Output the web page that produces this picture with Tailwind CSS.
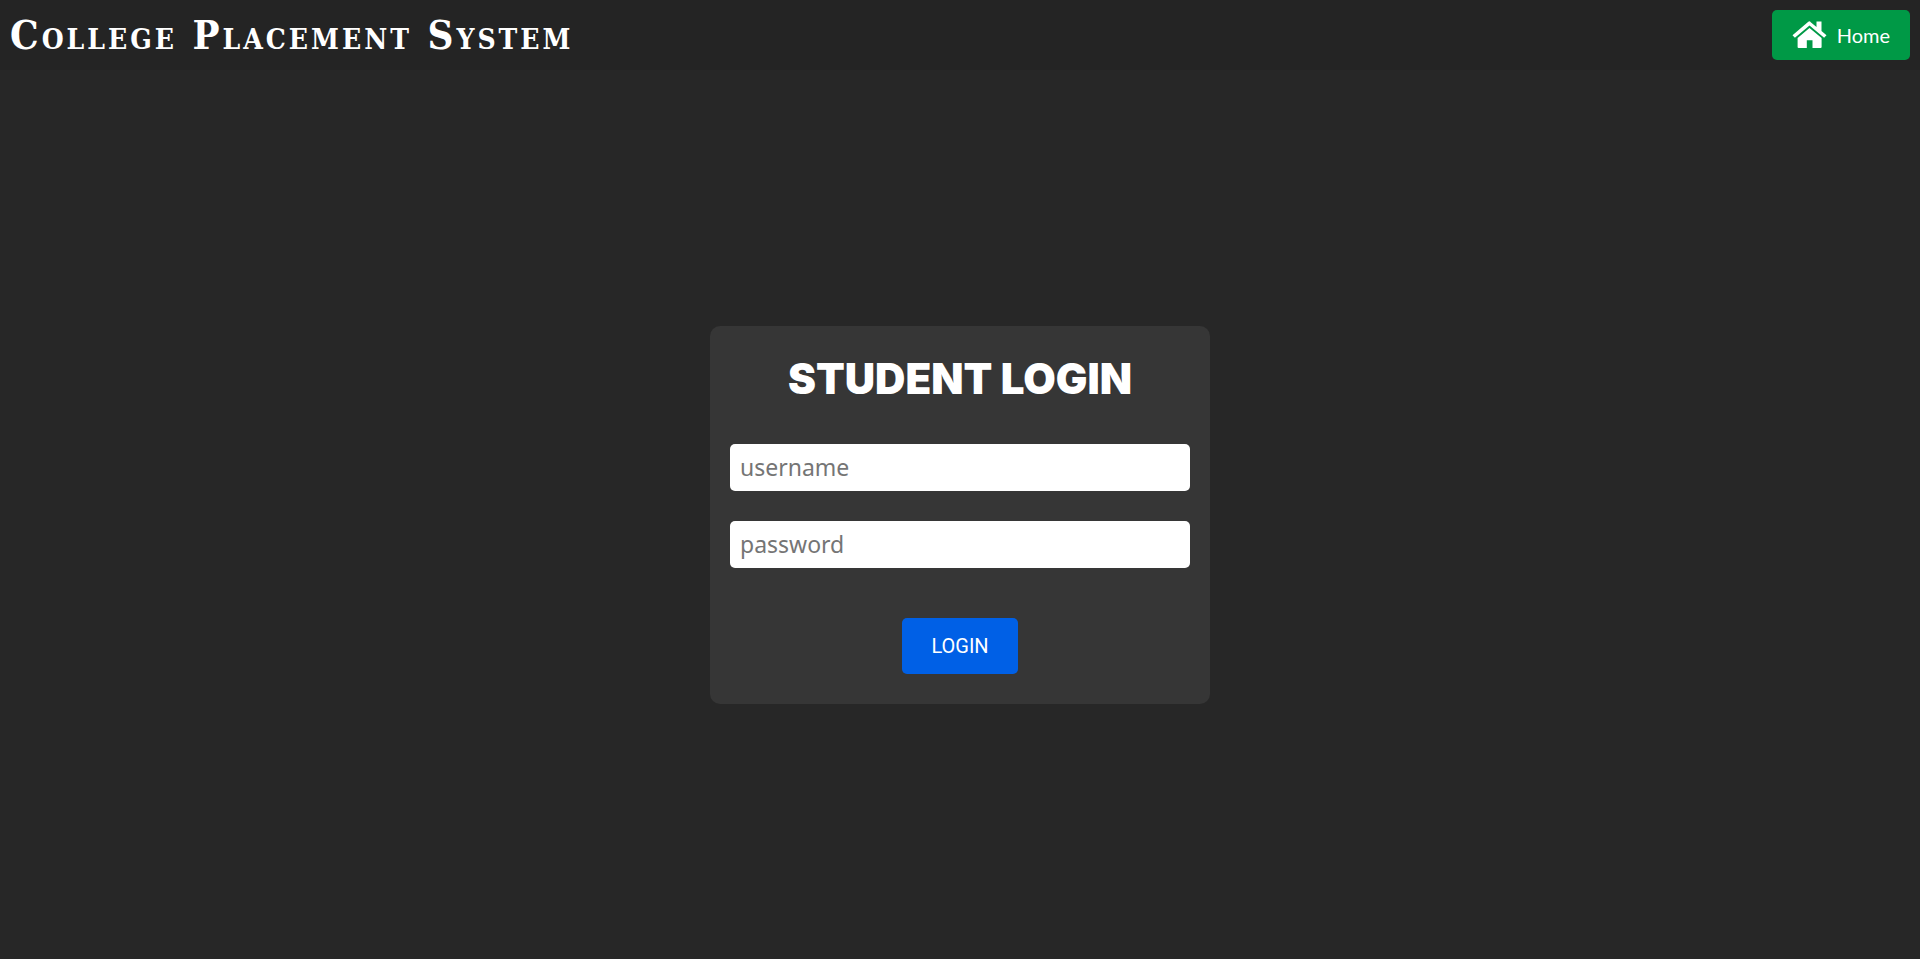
<!DOCTYPE html>
<html lang="en">
<head>
<meta charset="utf-8">
<meta name="viewport" content="width=device-width, initial-scale=1">
<title>College Placement System</title>
<script src="https://cdn.jsdelivr.net/npm/@tailwindcss/browser@4"></script>
</head>
<body class="flex min-h-screen flex-col bg-[#272727] text-white">
<header class="flex items-center justify-between bg-[#242424] p-[10px]">
  <h1 class="font-['DejaVu_Serif_Condensed','DejaVu_Serif',serif] text-[40px] leading-[50px] font-bold tracking-[3px] [font-variant-caps:small-caps]">College Placement System</h1>
  <a href="#" class="flex h-[50px] items-center gap-[10px] rounded-[5px] bg-[#009946] px-5 font-[Lato,sans-serif] text-xl">
    <svg class="h-[28px] w-[35px]" viewBox="0 0 35 28" fill="currentColor" aria-hidden="true">
      <path d="M17.5 0.3 24.5 6V0.5h5V10l5 4.2-2.4 2.6L17.5 4.6 2.9 16.8 0.5 14.2 16 1.1q1.5-1.5 3 0Z"/>
      <path d="M17.5 6.9 29.6 16.9V26q0 1-1 1H20.5V19.2h-5.7V27H6.6q-1 0-1-1V16.9Z"/>
    </svg>
    <span>Home</span>
  </a>
</header>
<main class="flex grow items-center justify-center">
  <form class="flex w-full max-w-[500px] flex-col items-center rounded-[10px] bg-[#363636] px-5 py-[30px]">
    <h2 class="mb-[42px] font-[Inter,sans-serif] text-[42px] leading-[46px] font-black">STUDENT LOGIN</h2>
    <input type="text" aria-label="username" placeholder="username" class="mb-[30px] h-[47px] w-full rounded-[5px] bg-white px-[10px] font-['Noto_Sans',sans-serif] text-[23px] text-black placeholder:text-[#757575]">
    <input type="password" aria-label="password" placeholder="password" class="mb-[50px] h-[47px] w-full rounded-[5px] bg-white px-[10px] font-['Noto_Sans',sans-serif] text-[23px] text-black placeholder:text-[#757575]">
    <button type="submit" class="h-14 min-w-[116px] rounded-[5px] bg-[#0060e6] px-5 font-[Roboto,sans-serif] text-xl">LOGIN</button>
  </form>
</main>
</body>
</html>
